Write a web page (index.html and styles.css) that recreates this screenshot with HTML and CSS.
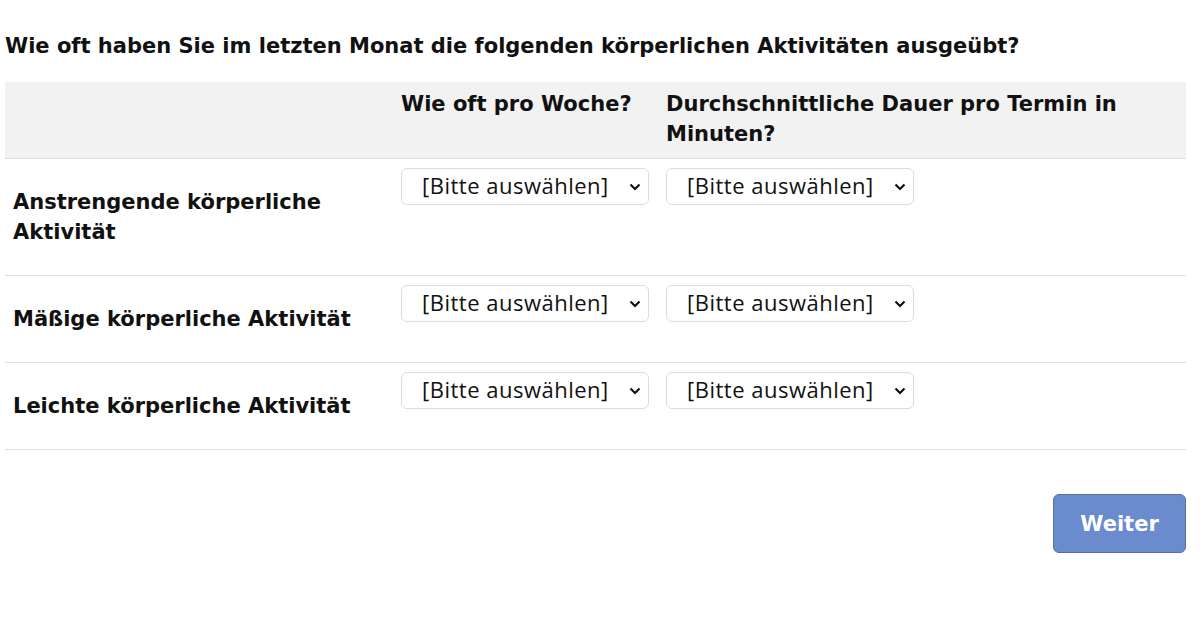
FILE: index.html
```html
<!DOCTYPE html>
<html lang="de">
	<head>
		<meta charset="UTF-8" />
		<meta name="viewport" content="width=device-width, initial-scale=1.0" />
		<title>Aktivitäten</title>
		<link rel="stylesheet" href="styles.css">
	</head>
	<body>
		<div class="page">
			<h1 class="question">Wie oft haben Sie im letzten Monat die folgenden körperlichen Aktivitäten ausgeübt?</h1>

			<table class="matrix">
				<thead>
					<tr>
						<th class="col-label"></th>
						<th class="col-week">Wie oft pro Woche?</th>
						<th>Durchschnittliche Dauer pro Termin in Minuten?</th>
					</tr>
				</thead>
				<tbody>
					<tr>
						<td class="row-label">Anstrengende körperliche Aktivität</td>
						<td class="cell"><select class="pick"><option>[Bitte auswählen]</option></select></td>
						<td class="cell"><select class="pick"><option>[Bitte auswählen]</option></select></td>
					</tr>
					<tr>
						<td class="row-label">Mäßige körperliche Aktivität</td>
						<td class="cell"><select class="pick"><option>[Bitte auswählen]</option></select></td>
						<td class="cell"><select class="pick"><option>[Bitte auswählen]</option></select></td>
					</tr>
					<tr>
						<td class="row-label">Leichte körperliche Aktivität</td>
						<td class="cell"><select class="pick"><option>[Bitte auswählen]</option></select></td>
						<td class="cell"><select class="pick"><option>[Bitte auswählen]</option></select></td>
					</tr>
				</tbody>
			</table>

			<div class="actions">
				<button class="btn-next">Weiter</button>
			</div>
		</div>
	</body>
</html>
```

FILE: styles.css
```css
* {
	margin: 0;
	padding: 0;
	box-sizing: border-box;
}

body {
	font-family: "DejaVu Sans", "Liberation Sans", sans-serif;
	color: #111;
	background: #fff;
}

.page {
	width: 1186px;
	padding: 31px 0 0 5px;
}

.question {
	font-size: 21px;
	font-weight: 700;
	line-height: 30px;
	margin-bottom: 21px;
}

.matrix {
	width: 100%;
	border-collapse: collapse;
}

.matrix thead th {
	background: #f2f2f2;
	text-align: left;
	vertical-align: top;
	font-size: 21px;
	font-weight: 700;
	line-height: 30px;
	padding: 7px 6px 9px 6px;
	border-bottom: 1px solid #dedede;
}

.col-label {
	width: 390px;
}

.col-week {
	width: 265px;
}

.matrix tbody td {
	border-bottom: 1px solid #dedede;
}

.row-label {
	font-weight: 700;
	font-size: 21px;
	line-height: 30px;
	padding: 28px 8px 28px 8px;
	vertical-align: middle;
}

.cell {
	vertical-align: top;
	padding: 9px 6px 0 6px;
}

.pick {
	appearance: none;
	width: 248px;
	height: 37px;
	border: 1px solid #dcdcdc;
	border-radius: 6px;
	background-color: #fff;
	background-image: url("data:image/svg+xml;utf8,<svg xmlns='http://www.w3.org/2000/svg' width='12' height='8' viewBox='0 0 12 8'><path d='M1.5 1.5 L6 6 L10.5 1.5' fill='none' stroke='%23111' stroke-width='2.2'/></svg>");
	background-repeat: no-repeat;
	background-position: right 7px center;
	background-size: 12px 8px;
	font-family: "Open Sans", "Noto Sans", sans-serif;
	font-size: 22px;
	letter-spacing: 0.5px;
	color: #111;
	padding: 0 30px 4px 20px;
}

.actions {
	display: flex;
	justify-content: flex-end;
	padding-top: 44px;
}

.btn-next {
	width: 133px;
	height: 59px;
	background: #6a8bcd;
	border: 1px solid #5b6f96;
	border-radius: 6px;
	color: #fff;
	font-family: "DejaVu Sans", sans-serif;
	font-weight: 700;
	font-size: 21px;
}
```
